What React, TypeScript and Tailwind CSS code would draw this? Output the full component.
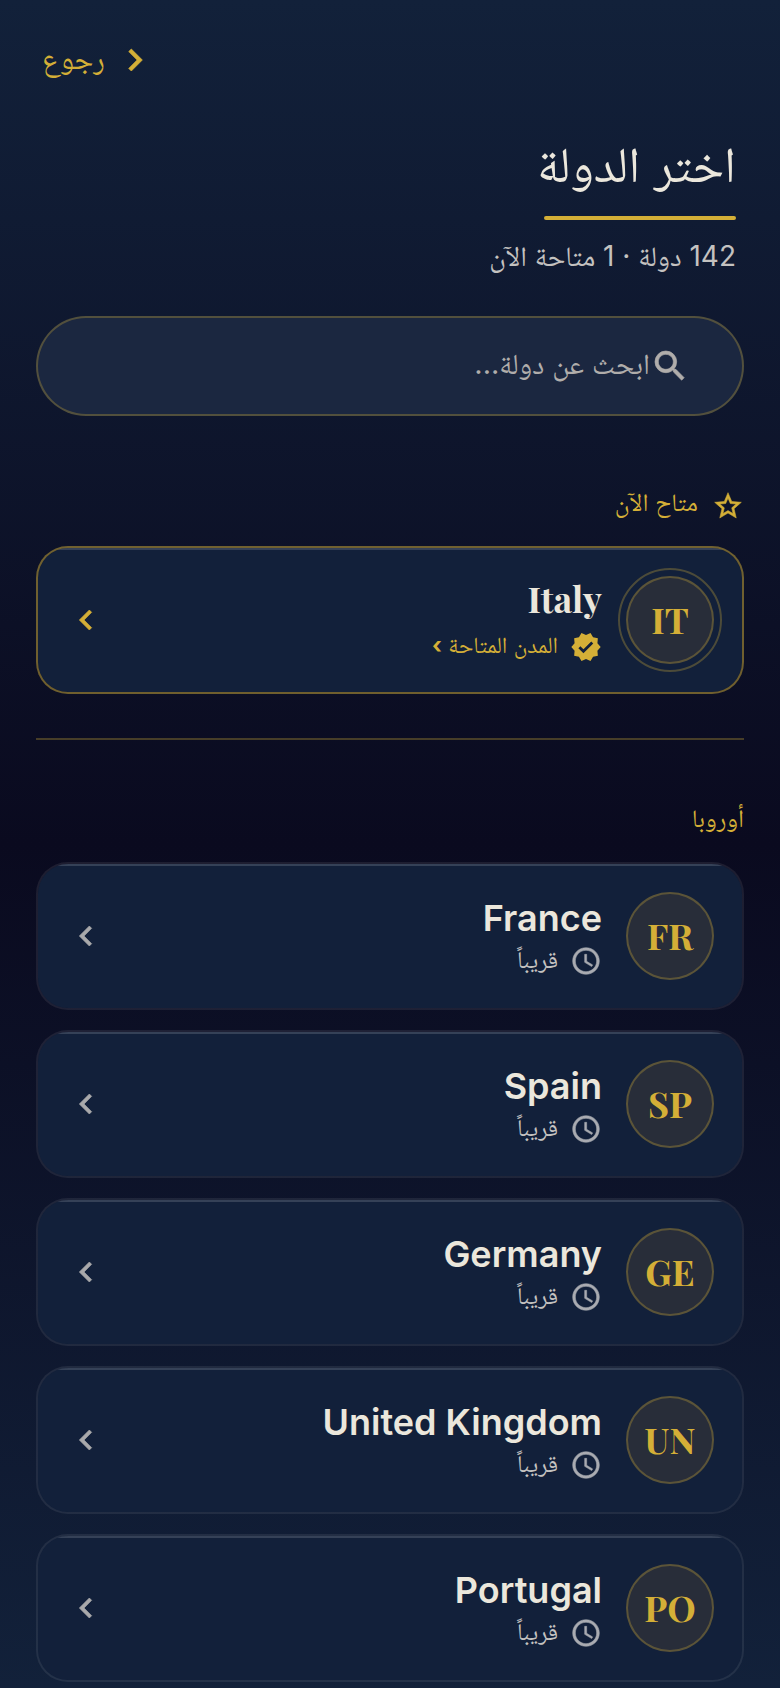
type Country = {
  code: string;
  name: string;
  available?: boolean;
};

const available: Country[] = [{ code: 'IT', name: 'Italy', available: true }];

const europe: Country[] = [
  { code: 'FR', name: 'France' },
  { code: 'SP', name: 'Spain' },
  { code: 'GE', name: 'Germany' },
  { code: 'UN', name: 'United Kingdom' },
  { code: 'PO', name: 'Portugal' },
];

const icons = {
  chevronLeft: 'M15.41 7.41 14 6l-6 6 6 6 1.41-1.41L10.83 12z',
  chevronRight: 'M10 6 8.59 7.41 13.17 12l-4.58 4.59L10 18l6-6z',
  clock:
    'M11.99 2C6.47 2 2 6.48 2 12s4.47 10 9.99 10C17.52 22 22 17.52 22 12S17.52 2 11.99 2zM12 20c-4.42 0-8-3.58-8-8s3.58-8 8-8 8 3.58 8 8-3.58 8-8 8zm.5-13H11v6l5.25 3.15.75-1.23-4.5-2.67z',
  search:
    'M15.5 14h-.79l-.28-.27A6.471 6.471 0 0 0 16 9.5 6.5 6.5 0 1 0 9.5 16c1.61 0 3.09-.59 4.23-1.57l.27.28v.79l5 4.99L20.49 19l-4.99-5zm-6 0C7.01 14 5 11.99 5 9.5S7.01 5 9.5 5 14 7.01 14 9.5 11.99 14 9.5 14z',
  star: 'M22 9.24l-7.19-.62L12 2 9.19 8.63 2 9.24l5.46 4.73L5.82 21 12 17.27 18.18 21l-1.63-7.03L22 9.24zM12 15.4l-3.76 2.27 1-4.28-3.32-2.88 4.38-.38L12 6.1l1.71 4.04 4.38.38-3.32 2.88 1 4.28L12 15.4z',
  verified:
    'M23 12l-2.44-2.79.34-3.69-3.61-.82-1.89-3.2L12 2.96 8.6 1.5 6.71 4.69 3.1 5.5l.34 3.7L1 12l2.44 2.79-.34 3.7 3.61.82L8.6 22.5l3.4-1.47 3.4 1.46 1.89-3.19 3.61-.82-.34-3.69L23 12zm-12.91 4.72l-3.8-3.81 1.48-1.48 2.32 2.33 5.85-5.87 1.48 1.48-7.33 7.35z',
};

function Icon({ name, className }: { name: keyof typeof icons; className: string }) {
  return (
    <svg
      viewBox="0 0 24 24"
      fill="currentColor"
      stroke="currentColor"
      strokeWidth={name === 'verified' ? 0 : 0.4}
      aria-hidden="true"
      className={`shrink-0 ${className}`}
    >
      <path d={icons[name]} />
    </svg>
  );
}

function CountryCard({ country }: { country: Country }) {
  const { code, name, available } = country;

  return (
    <li>
      <button
        type="button"
        className={`relative flex h-[148px] w-full items-center gap-6 overflow-hidden rounded-[32px] border-2 bg-[#12203a] bg-clip-padding px-7 text-start before:absolute before:inset-x-0 before:top-0 before:h-0.5 before:bg-white/15 ${
          available ? 'border-[#d4af37]/50' : 'border-white/8'
        }`}
      >
        <span
          className={`flex size-[88px] shrink-0 items-center justify-center rounded-full border-2 border-[#d4af37]/30 bg-[#282d39] pb-0.5 font-['Playfair_Display','Liberation_Serif',serif] text-4xl font-bold text-[#d4af37] ${
            available ? 'outline-2 outline-offset-[6px] outline-[#d4af37]/30' : ''
          }`}
        >
          {code}
        </span>
        <span className="flex min-w-0 flex-1 flex-col pt-1.5">
          <span
            className={`text-4xl text-[#ebe7dc] ${
              available
                ? "font-['Playfair_Display','Liberation_Serif',serif] leading-[48px] font-bold"
                : 'leading-[44px] font-semibold'
            }`}
          >
            {name}
          </span>
          <span
            className={`flex items-center gap-3 ${
              available
                ? 'text-[23px] leading-[46px] text-[#d4af37]'
                : 'text-2xl leading-[40px] text-[#c4c2c0]'
            }`}
          >
            {available ? (
              <>
                <Icon name="verified" className="size-8" />
                <span className="pb-1">
                  المدن المتاحة <span className="font-bold">›</span>
                </span>
              </>
            ) : (
              <>
                <Icon name="clock" className="size-8 text-[#a9abb1]" />
                <span className="pb-0.5">قريباً</span>
              </>
            )}
          </span>
        </span>
        <Icon
          name="chevronLeft"
          className={`size-10 ${available ? 'text-[#d4af37]' : 'text-[#a9a9ab]'}`}
        />
      </button>
    </li>
  );
}

export default function App() {
  return (
    <div
      dir="rtl"
      className="min-h-screen bg-linear-to-b/srgb from-[#12213a] via-[#0a0a1f] to-[#12213a] px-9 pb-1.5 font-['Inter','Noto_Naskh_Arabic','DejaVu_Sans_Condensed',sans-serif] text-[#ebe7dc]"
    >
      <header className="flex justify-end pt-8">
        <button
          type="button"
          className="flex h-14 items-center gap-2 px-1.5 text-3xl text-[#d4af37]"
        >
          <Icon name="chevronRight" className="size-11" />
          <span className="pb-1">رجوع</span>
        </button>
      </header>

      <main>
        <div className="flex flex-col items-start px-2 pt-11">
          <h1 className="text-[50px] leading-[64px]">اختر الدولة</h1>
          <span className="mt-5 h-1 w-48 rounded-full bg-[#d4af37]" />
          <p className="mt-3.5 text-[28px] leading-[44px] text-[#c4c2c0]">
            142 دولة · 1 متاحة الآن
          </p>
        </div>

        <label className="mt-[38px] flex h-[100px] items-center rounded-full border-2 border-[#d4af37]/30 bg-[#1b2740] px-[52px]">
          <Icon name="search" className="size-10 text-[#b0adab]" />
          <input
            type="search"
            aria-label="ابحث عن دولة"
            placeholder="ابحث عن دولة..."
            className="h-16 min-w-0 flex-1 bg-transparent pb-1.5 text-[29px] outline-none placeholder:text-[#b0adab]"
          />
        </label>

        <section className="pt-[70px]">
          <h2 className="flex h-10 items-center gap-3.5 text-[25px] text-[#d4af37]">
            <Icon name="star" className="size-8" />
            <span className="pb-1.5">متاح الآن</span>
          </h2>
          <ul className="mt-5 flex flex-col gap-5">
            {available.map((country) => (
              <CountryCard key={country.code} country={country} />
            ))}
          </ul>
        </section>

        <hr className="mt-11 border-t-2 border-[#d4af37]/30" />

        <section className="pt-[62px]">
          <h2 className="flex h-10 items-center text-[25px] text-[#d4af37]">
            <span className="pb-1.5">أوروبا</span>
          </h2>
          <ul className="mt-5 flex flex-col gap-5">
            {europe.map((country) => (
              <CountryCard key={country.code} country={country} />
            ))}
          </ul>
        </section>
      </main>
    </div>
  );
}
